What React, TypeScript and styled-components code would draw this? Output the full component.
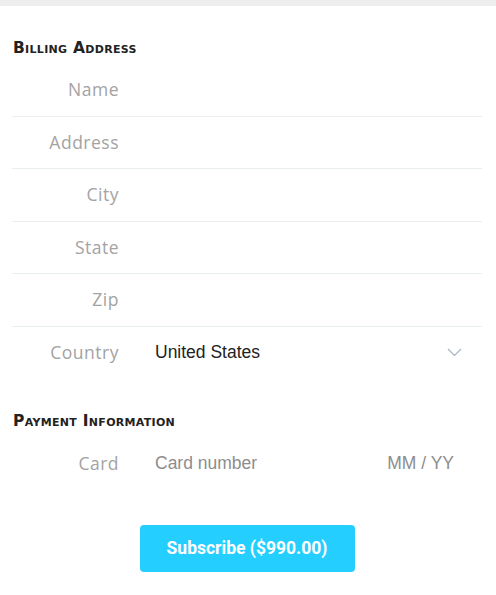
import styled, { createGlobalStyle } from "styled-components";

const GlobalStyle = createGlobalStyle`
  html, body {
    margin: 0;
    padding: 0;
    background: #ffffff;
  }
  body {
    border-top: 6px solid #eeeeee;
  }
`;

const billingFields = ["Name", "Address", "City", "State", "Zip"];

export default function App() {
  return (
    <>
      <GlobalStyle />
      <Page>
        <Section>
          <Heading>Billing Address</Heading>
          {billingFields.map((field) => (
            <Row key={field} $bordered>
              <Label>{field}</Label>
              <Field />
            </Row>
          ))}
          <Row>
            <Label>Country</Label>
            <Select>
              <span>United States</span>
              <svg width="15" height="9" viewBox="0 0 15 9">
                <path d="M1 1 L7.5 7.5 L14 1" fill="none" stroke="#a9b4c0" strokeWidth="1.2" />
              </svg>
            </Select>
          </Row>
        </Section>
        <Section>
          <Heading $payment>Payment Information</Heading>
          <Row>
            <Label>Card</Label>
            <CardField>
              <Placeholder>Card number</Placeholder>
              <Placeholder>MM / YY</Placeholder>
            </CardField>
          </Row>
        </Section>
        <Actions>
          <SubscribeButton>Subscribe ($990.00)</SubscribeButton>
        </Actions>
      </Page>
    </>
  );
}

const Page = styled.div`
  padding: 33px 14px 0 12px;
  display: flex;
  flex-direction: column;
`;

const Section = styled.div`
  display: flex;
  flex-direction: column;
`;

const Heading = styled.h2<{ $payment?: boolean }>`
  margin: ${(p) => (p.$payment ? "33px" : "0")} 0 ${(p) => (p.$payment ? "8px" : "7px")} 1px;
  font-family: "DejaVu Sans", "Open Sans", sans-serif;
  font-weight: 700;
  font-size: 15.5px;
  font-variant: small-caps;
  letter-spacing: 0.3px;
  line-height: 18px;
  color: #222222;
`;

const Row = styled.div<{ $bordered?: boolean }>`
  display: flex;
  align-items: center;
  height: 51.5px;
  border-bottom: 1px solid ${(p) => (p.$bordered ? "#e9eef1" : "transparent")};
`;

const Label = styled.label`
  width: 107px;
  flex-shrink: 0;
  text-align: right;
  font-family: "Open Sans", "DejaVu Sans", sans-serif;
  font-weight: 400;
  font-size: 17.5px;
  color: #a3a3a3;
  letter-spacing: 0.5px;
  margin-top: -1px;
`;

const Field = styled.div`
  flex: 1;
  height: 100%;
`;

const Select = styled.div`
  flex: 1;
  display: flex;
  align-items: center;
  justify-content: space-between;
  padding: 1px 20px 0 36px;
  font-family: "Liberation Sans", Arial, sans-serif;
  font-size: 17.5px;
  color: #222222;
`;

const CardField = styled.div`
  flex: 1;
  display: flex;
  align-items: center;
  justify-content: space-between;
  padding: 0 28px 0 36px;
`;

const Placeholder = styled.span`
  font-family: "Liberation Sans", Arial, sans-serif;
  font-size: 17.5px;
  color: #8d8d8d;
`;

const Actions = styled.div`
  display: flex;
  justify-content: center;
  padding-top: 34px;
`;

const SubscribeButton = styled.button`
  width: 215px;
  height: 47px;
  border: none;
  border-radius: 4px;
  background: #24cfff;
  color: #ffffff;
  font-family: Roboto, "Liberation Sans", sans-serif;
  font-weight: 700;
  font-size: 17.5px;
  cursor: pointer;
`;
